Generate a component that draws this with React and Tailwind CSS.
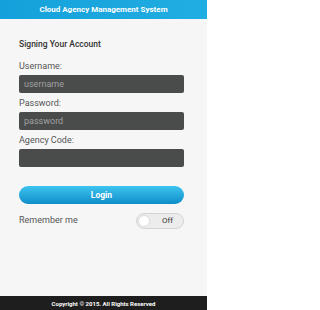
import React from 'react';

const Field = ({ label, placeholder, type = 'text' }) => (
  <div className="flex flex-col">
    <label className="h-[12px] text-[9px] leading-[12px] text-[#555]">{label}</label>
    <input
      type={type}
      placeholder={placeholder}
      className="mt-[3px] h-[18px] w-full rounded-[2px] bg-[#4a4c4c] px-[5px] text-[9px] text-white outline-none placeholder:text-[#a0a0a0]"
    />
  </div>
);

export default function App() {
  const [remember, setRemember] = React.useState(false);

  return (
    <div
      className="flex h-[310px] w-[207px] flex-col overflow-hidden bg-[#f6f6f6]"
      style={{ fontFamily: 'Roboto, "Liberation Sans", sans-serif' }}
    >
      {/* Header */}
      <header className="flex h-[19px] shrink-0 items-center justify-center bg-gradient-to-r from-[#14a0da] to-[#21aee2]">
        <h1 className="text-[8px] font-bold text-white">Cloud Agency Management System</h1>
      </header>

      {/* Form */}
      <main className="flex flex-col pl-[19px] pr-[23px] pt-[19px]">
        <h2 className="h-[12px] text-[8.5px] font-medium leading-[12px] text-[#333]">Signing Your Account</h2>

        <div className="mt-[10px] flex flex-col gap-[4px]">
          <Field label="Username:" placeholder="username" />
          <Field label="Password:" placeholder="password" type="password" />
          <Field label="Agency Code:" placeholder="" />
        </div>

        <button className="mt-[19px] h-[18px] w-full rounded-full bg-gradient-to-b from-[#3cc4ef] to-[#0d8ec9] text-[8.5px] font-bold text-white">
          Login
        </button>

        <div className="mt-[9px] flex items-center justify-between">
          <span className="text-[9px] text-[#555]">Remember me</span>
          <button
            onClick={() => setRemember(!remember)}
            className="relative flex h-[16px] w-[48px] items-center justify-end rounded-full border border-[#d4d4d4] bg-[#ececec] pr-[10px]"
          >
            <span className="absolute left-[1px] top-[1px] h-[12px] w-[12px] rounded-full border border-[#dcdcdc] bg-white" />
            <span className="text-[8px] text-[#333]">{remember ? 'On' : 'Off'}</span>
          </button>
        </div>
      </main>

      {/* Footer */}
      <footer className="mt-auto flex h-[14px] shrink-0 items-center justify-center bg-[#1e1e1e]">
        <span className="text-[6px] font-bold text-white">Copyright © 2015. All Rights Reserved</span>
      </footer>
    </div>
  );
}
